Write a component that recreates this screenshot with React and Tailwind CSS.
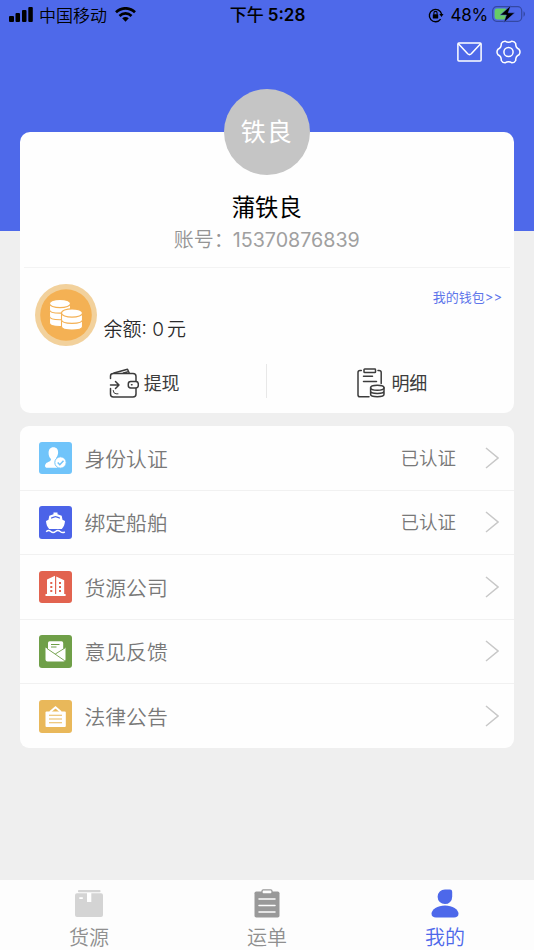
import React from "react";

const rows = [
  { label: "身份认证", status: "已认证", color: "bg-[#70c4fa]", icon: <IdentityIcon /> },
  { label: "绑定船舶", status: "已认证", color: "bg-[#4b63e8]", icon: <ShipIcon /> },
  { label: "货源公司", color: "bg-[#e2634f]", icon: <CompanyIcon /> },
  { label: "意见反馈", color: "bg-[#6f9f48]", icon: <FeedbackIcon /> },
  { label: "法律公告", color: "bg-[#e9b85a]", icon: <NoticeIcon /> },
];

const tabs = [
  { label: "货源", icon: <BoxIcon />, color: "text-[#8f8f8f]" },
  { label: "运单", icon: <ClipboardIcon />, color: "text-[#8f8f8f]" },
  { label: "我的", icon: <UserIcon />, color: "text-[#4d68ea]" },
];

export default function App() {
  return (
    <div className="flex h-[950px] w-[534px] flex-col overflow-hidden whitespace-nowrap bg-[#efefef] font-['Inter','Noto_Sans_CJK_SC',sans-serif]">
      <header className="h-[231px] shrink-0 bg-[#4e69ea]">
        <StatusBar />
        <div className="flex h-[44px] items-center justify-end gap-[14px] pr-[13px] text-white">
          <MailIcon />
          <GearIcon />
        </div>
      </header>
      <main className="-mt-[99px] flex-1 pl-[19.5px] pr-[20px]">
        <ProfileCard />
        <div className="mt-[13.5px] h-[322px] overflow-hidden rounded-[9px] bg-[#fefefe]">
          {rows.map((r) => (
            <MenuRow key={r.label} {...r} />
          ))}
        </div>
      </main>
      <nav className="grid h-[70px] shrink-0 grid-cols-3 bg-[#fdfdfd]">
        {tabs.map((t) => (
          <div key={t.label} className={`flex flex-col items-center pt-[9px] ${t.color}`}>
            {t.icon}
            <span className="mt-[5px] text-[20px] font-[350] leading-[30px]">{t.label}</span>
          </div>
        ))}
      </nav>
    </div>
  );
}

function StatusBar() {
  return (
    <div className="flex h-[30px] items-center text-black">
      <div className="flex flex-1 items-center pl-[9px]">
        <svg className="-mt-[2px]" width="24" height="15" viewBox="0 0 24 15" fill="currentColor">
          <rect x="0" y="9" width="5" height="6" rx="1" />
          <rect x="6.5" y="6" width="4.5" height="9" rx="1" />
          <rect x="13" y="3" width="4.5" height="12" rx="1" />
          <rect x="19.3" y="0" width="4.5" height="15" rx="1" />
        </svg>
        <span className="ml-[6px] pt-px text-[17px] font-[350] leading-[30px]">中国移动</span>
        <svg className="-mt-[2px] ml-[8px]" width="21" height="15" viewBox="0 0 21 15" fill="none" stroke="currentColor" strokeWidth="2.7">
          <path d="M1 5.2C6.5 0 14.5 0 20 5.2" />
          <path d="M4.5 9C8 5.6 13 5.6 16.5 9" />
          <path d="M7.2 11.3C9.2 9.6 11.8 9.6 13.8 11.3L10.5 14.8Z" fill="currentColor" stroke="none" />
        </svg>
      </div>
      <div className="flex items-center gap-[4px] leading-[30px]">
        <span className="text-[17px] font-medium">下午</span>
        <span className="text-[17px] font-semibold">5:28</span>
      </div>
      <div className="flex flex-1 items-center justify-end pr-[8px]">
        <svg width="16" height="16" viewBox="0 0 16 16" fill="none" stroke="currentColor" strokeWidth="1.4">
          <path d="M12.6 12.2A6.2 6.2 0 1 1 13.6 7.2" />
          <path d="M11.3 7h4.2l-2 2.9Z" fill="currentColor" stroke="none" />
          <rect x="4.8" y="7.2" width="5.4" height="4.2" rx=".5" fill="currentColor" stroke="none" />
          <path d="M5.9 7.4V6a1.6 1.6 0 0 1 3.2 0v1.4" strokeWidth="1.1" />
        </svg>
        <span className="ml-[6px] text-[17px] leading-[30px] tracking-[-0.2px]">48%</span>
        <svg className="-mt-[2px] ml-[4px]" width="34" height="18" viewBox="0 0 34 18">
          <rect x=".7" y="1.7" width="29" height="14.6" rx="4" fill="none" stroke="#3448a3" strokeWidth="1.2" />
          <path d="M31.5 6.3c2 1 2 4.4 0 5.4Z" fill="#3448a3" />
          <rect x="2.6" y="3.6" width="12.6" height="10.8" rx="2.4" fill="#66cb66" />
          <path d="M18.8.6 8.2 10h6.2L11.8 17.5 22.8 7.8h-6.6Z" fill="#000" stroke="#4e69ea" strokeWidth=".5" />
        </svg>
      </div>
    </div>
  );
}

function ProfileCard() {
  return (
    <section className="flex h-[280.5px] flex-col rounded-[10px] bg-[#fefefe]">
      <div className="flex flex-col items-center">
        <div className="-mt-[43px] flex h-[86px] w-[86px] items-center justify-center rounded-full bg-[#c5c5c5] pt-[2px] text-[25px] tracking-[1px] text-white">
          铁良
        </div>
        <div className="mt-[17px] text-[23.3px] leading-[32px] text-black">蒲铁良</div>
        <div className="flex font-[350] leading-[32px] text-[#949494]">
          <span className="w-[59px] text-[20px]">账号：</span>
          <span className="text-[19.7px] font-normal text-[#a0a0a0]">15370876839</span>
        </div>
      </div>
      <div className="mx-[4px] mt-[11px] border-t border-[#f3f3f3]" />
      <div className="flex h-[78px] pl-[15px] pr-[12px] pt-[16px]">
        <CoinsIcon />
        <div className="ml-[7px] mt-[31px] text-[19px] font-[350] leading-[30px] text-[#2b2b2b]">
          余额: 0<span className="ml-[3px]">元</span>
        </div>
        <div className="ml-auto mt-[3px] text-[13px] leading-[20px] text-[#5d75ea]">我的钱包&gt;&gt;</div>
      </div>
      <div className="mt-[17px] flex h-[35px] items-center text-[18px] leading-[30px] text-[#3c3c3c]">
        <div className="flex flex-1 items-center justify-center gap-[5px] pl-[3px] pt-[4px]">
          <WalletIcon />
          <span className="mt-[3px]">提现</span>
        </div>
        <div className="h-[34px] w-px bg-[#e8e8e8]" />
        <div className="flex flex-1 items-center justify-center gap-[6px] pl-[4px] pt-[4px]">
          <DetailIcon />
          <span className="mt-[3px]">明细</span>
        </div>
      </div>
    </section>
  );
}

function MenuRow({ label, status, color, icon }) {
  return (
    <div className="flex h-[64.5px] items-center border-b border-[#f1f1f1] pl-[19px] pr-[15px] text-[#787878] last:border-0">
      <div className={`flex h-[32.5px] w-[33px] items-center justify-center rounded-[3px] ${color}`}>{icon}</div>
      <span className="ml-[13px] mt-[3px] text-[20.8px] font-[350]">{label}</span>
      <span className="ml-auto mt-[2px] text-[18.5px] font-[350]">{status}</span>
      <svg className="ml-[29px]" width="14" height="22" viewBox="0 0 14 22" fill="none" stroke="#c8c8c8" strokeWidth="1.5">
        <path d="M1 1l12 10L1 21" />
      </svg>
    </div>
  );
}

function MailIcon() {
  return (
    <svg width="25" height="20" viewBox="0 0 25 20" fill="none" stroke="currentColor" strokeWidth="1.5" strokeLinejoin="round">
      <rect x=".9" y=".9" width="23.2" height="18.2" rx="1" />
      <path d="M1.2 1.4 10.7 11.8q1.8 1.7 3.6 0L23.8 1.4" />
    </svg>
  );
}

function GearIcon() {
  return (
    <svg width="25" height="24" viewBox="0 0 25 24" fill="none" stroke="currentColor" strokeWidth="1.5" strokeLinejoin="round">
      <path d="M9 1.2Q12.5 3.5 16 1.2Q18.6 1.2 19.7 3.5Q19.5 7.7 23 9.2Q25 12 23 14.8Q19.5 16.3 19.7 20.5Q18.6 22.8 16 22.8Q12.5 20.5 9 22.8Q6.4 22.8 5.3 20.5Q5.5 16.3 2 14.8Q0 12 2 9.2Q5.5 7.7 5.3 3.5Q6.4 1.2 9 1.2Z" />
      <circle cx="12.5" cy="12" r="4.6" />
    </svg>
  );
}

function CoinsIcon() {
  return (
    <svg className="shrink-0" width="62" height="62" viewBox="0 0 62 62">
      <circle cx="31" cy="31" r="31" fill="#f2d19c" />
      <circle cx="31" cy="31" r="25.8" fill="#f4b154" />
      <g fill="#fff" stroke="#f4b154" strokeWidth="1.1">
        <path d="M14.5 32v7c0 4.6 21 4.6 21 0V32Z" />
        <path d="M14.5 26v6.3c0 4.6 21 4.6 21 0V26Z" />
        <path d="M14.5 19.5v6.2c0 4.6 21 4.6 21 0v-6.2Z" />
        <ellipse cx="25" cy="19.5" rx="10.5" ry="4.1" />
        <path d="M26.5 36v6.5c0 4.8 21 4.8 21 0V36Z" />
        <path d="M26.5 29v6.8c0 4.8 21 4.8 21 0V29Z" />
        <ellipse cx="37" cy="29" rx="10.5" ry="4.1" />
      </g>
    </svg>
  );
}

function WalletIcon() {
  return (
    <svg width="30" height="30" viewBox="0 0 30 30" fill="none" stroke="#3c3c3c" strokeWidth="1.5" strokeLinecap="round" strokeLinejoin="round">
      <path d="M1.5 10.5V8q0-2.5 2.8-2.5H24q3 0 3 3V13M27 20.5V26q0 3-3 3H4.3q-2.8 0-2.8-3v-5.5" />
      <path d="M5 5 18.5 1.2l1.7 3.8M14.5 5l3.8-1" />
      <rect x="19.3" y="13.5" width="10" height="6.5" rx="2.4" />
      <path d="M22.5 16.8h.5M1.5 17h8.5M6.5 13.5 10 17l-3.5 3.5" />
      <path d="M4.2 22.5q0 3 2.8 3.3h2" strokeWidth="1" />
    </svg>
  );
}

function DetailIcon() {
  return (
    <svg width="28" height="30" viewBox="0 0 28 30" fill="none" stroke="#3c3c3c" strokeWidth="1.5" strokeLinecap="round" strokeLinejoin="round">
      <path d="M4.3 2.5H3Q1 2.5 1 4.500V27q0 1.800 2 1.800h9M21 2.500H22q2.200 0 2.200 2V15.500" />
      <rect x="7" y="1" width="11.5" height="3.6" rx=".7" />
      <path d="M6.5 8.3h9M6.5 13.5h13" />
      <ellipse cx="20.3" cy="19.8" rx="6.7" ry="2.5" />
      <path d="M13.6 19.8v6.4c0 3.3 13.4 3.3 13.4 0v-6.4M13.6 23c0 3.3 13.4 3.3 13.4 0" />
    </svg>
  );
}

function IdentityIcon() {
  return (
    <svg width="33" height="33" viewBox="0 0 33 33" fill="#fff">
      <path d="M14.3 6.3c3.3 0 5 2.2 4.8 5.300-.1 2.300-.8 4-1.900 5.200-.4 1.500.2 2.200 1.500 2.800l4.200 2-1 5.100H8.200c-2.700 0-2.600-2.700-1.200-4.300 1.600-1.400 5.300-1.700 5-4.300-1.800-1.400-2.500-3.800-2.400-6.300.1-3.200 1.600-5.500 4.700-5.500Z" />
      <circle cx="21.5" cy="21.5" r="5.7" stroke="#70c4fa" strokeWidth="1" />
      <path d="m18.7 21.5 2.1 2.2 3.7-4" fill="none" stroke="#70c4fa" strokeWidth="1.5" />
    </svg>
  );
}

function ShipIcon() {
  return (
    <svg width="33" height="33" viewBox="0 0 33 33" fill="#fff">
      <path d="M14.5 8.2V6.5h4v1.7l4.2 1.500.8 4 2.500 1.300c-.2 3.200-1.200 6-3.200 8H10.200c-2-2-3-4.800-3.200-8l2.500-1.300.8-4Z" />
      <path d="m12 12.800.3-1.600 4.200-1.300 4.200 1.300.3 1.600-4.500-1.500Z" fill="#4b63e8" />
      <path d="M7.200 25.800q2.300-2.300 4.600-.3t4.700 0q2.400-2 4.700 0t4.600.3" fill="none" stroke="#fff" strokeWidth="1.5" />
    </svg>
  );
}

function CompanyIcon() {
  return (
    <svg width="33" height="33" viewBox="0 0 33 33" fill="#fff">
      <path d="M8 24V9.500l8-3.700V24h1.200V6.500l8 3.700V24h1.400v2H6.500v-2Z" />
      <path d="M11.300 12h2v2h-2zM11.300 16h2v2h-2zM11.300 20h2v2h-2zM20 12h2v2h-2zM20 16h2v2h-2zM20 20h2v2h-2z" fill="#e2634f" />
    </svg>
  );
}

function FeedbackIcon() {
  return (
    <svg width="33" height="33" viewBox="0 0 33 33" fill="#fff">
      <path d="M9 8q0-1.700 1.700-1.700h11.800q1.700 0 1.700 1.700v6.700L16.500 19 9 14.500Z" />
      <path d="M6.500 12.500 16.200 19l10.300-6.500v12q0 2-2 2h-16q-2 0-2-2Z" />
      <path d="M16.300 19l10-6.200M8 13.500l17.800 12.300" fill="none" stroke="#6f9f48" strokeWidth=".9" />
      <path d="M12 9.500h8.500M12 12h5.500" stroke="#6f9f48" strokeWidth="1" />
    </svg>
  );
}

function NoticeIcon() {
  return (
    <svg width="33" height="33" viewBox="0 0 33 33">
      <rect x="6.5" y="11.5" width="20.3" height="15.5" rx="1" fill="#fff" />
      <path d="m11 12 5.5-4.700L22 12" fill="none" stroke="#fff" strokeWidth="2" />
      <path d="M10 15.300h13M10 19h13M10 22.700h13" stroke="#e9b85a" strokeWidth="1.1" />
    </svg>
  );
}

function BoxIcon() {
  return (
    <svg width="28" height="29" viewBox="0 0 28 29">
      <rect x="3" y="1" width="22.5" height="2.3" rx=".8" fill="#d4d4d4" />
      <rect y="4.3" width="28" height="23.7" rx="2" fill="#d4d4d4" />
      <path d="M12 4h4.300v9H12zM4.300 8.200h3.500v1.700H4.300z" fill="#fff" />
    </svg>
  );
}

function ClipboardIcon() {
  return (
    <svg width="26" height="29" viewBox="0 0 26 29">
      <rect x=".5" y="2.5" width="25" height="26" rx="1.8" fill="#999" />
      <rect x="8" y=".9" width="10" height="4" rx="1.3" fill="#fdfdfd" stroke="#999" strokeWidth="1.3" />
      <path d="M5 10h16M5 16.500h16M5 23h16" stroke="#fdfdfd" strokeWidth="1.5" strokeLinecap="round" />
    </svg>
  );
}

function UserIcon() {
  return (
    <svg width="28" height="29" viewBox="0 0 28 29" fill="currentColor">
      <path d="M14 .5h5q2.200 0 2.200 2.200v5a7.300 7.300 0 1 1-7.200-7.200Z" />
      <path d="M14 16.500c7.500 0 13.500 4 13.500 8.300 0 2.700-1.800 3.700-4.500 3.700H5C2.300 28.500.5 27.500.5 24.800.5 20.500 6.500 16.500 14 16.500Z" />
    </svg>
  );
}
